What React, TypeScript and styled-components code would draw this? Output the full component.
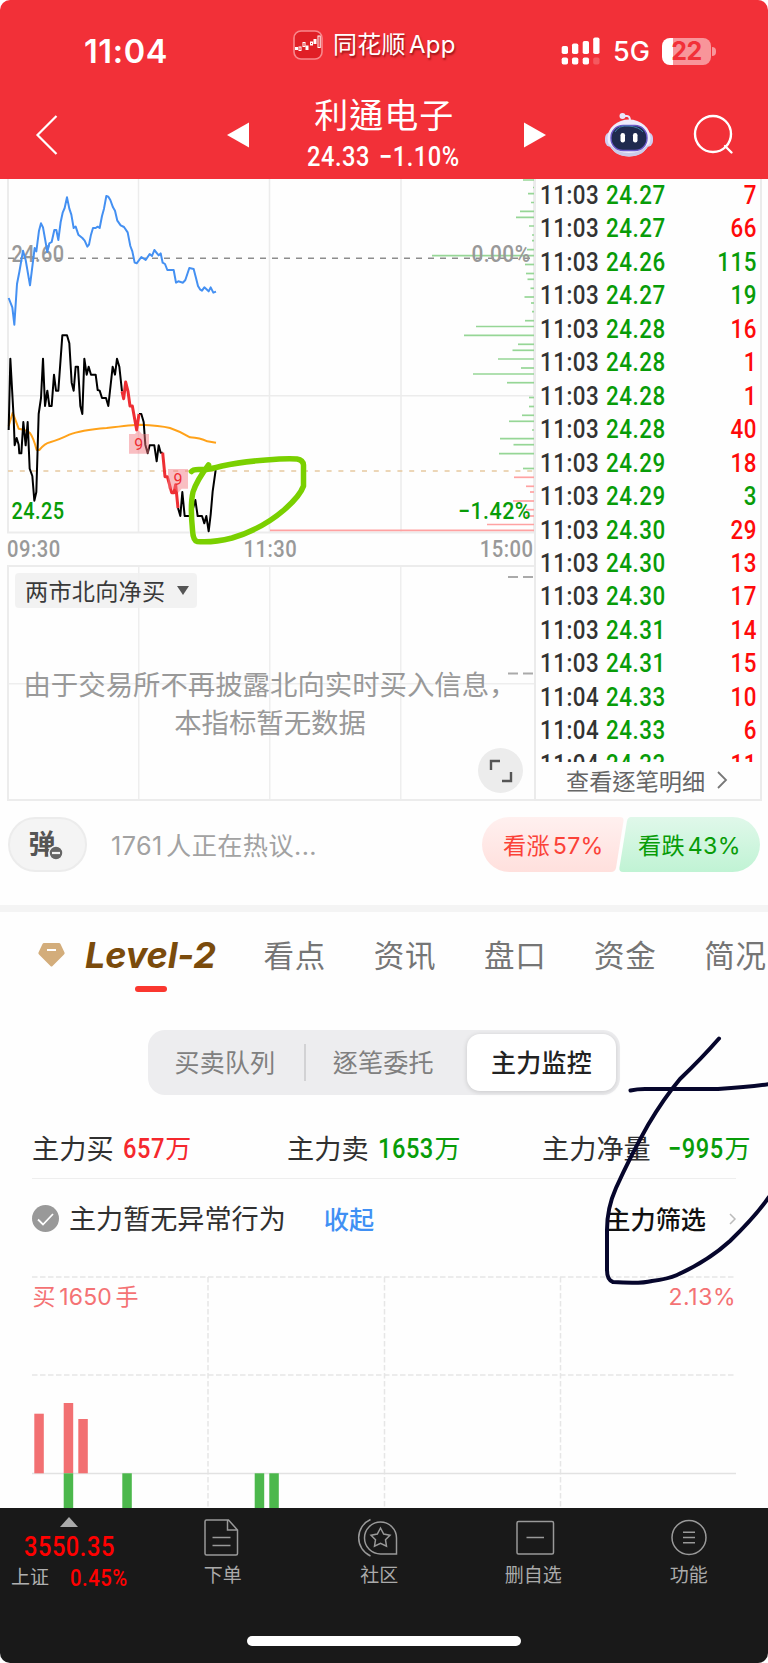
import React from "react";
import styled, { createGlobalStyle } from "styled-components";

const SANS = `Inter, "Noto Sans CJK SC", sans-serif`;
const SANS_TC = `Inter, "Noto Sans CJK TC", "Noto Sans CJK SC", sans-serif`;
const DIN = `Roboto, "Noto Sans CJK SC", sans-serif`;

const RED = "#f23038";
const GREEN = "#089c08";
const TICK_RED = "#ff0a0a";

const GlobalStyle = createGlobalStyle`
  * { box-sizing: border-box; }
  body { margin: 0; background: #fff; font-family: ${SANS}; }
  svg { display: block; flex: none; overflow: visible; }
`;

const Screen = styled.div`
  position: relative;
  width: 768px;
  height: 1663px;
  overflow: hidden;
  border-radius: 10px;
  background: #fefefe;
  display: flex;
  flex-direction: column;
`;

/* condensed numerals used for every price, time and volume */
const Num = styled.span<{ $size: number; $color?: string; $origin?: string; $trim?: number }>`
  display: inline-block;
  font-family: ${DIN};
  font-size: ${(p) => p.$size}px;
  font-weight: 500;
  letter-spacing: 0.6px;
  transform: scaleX(0.86);
  transform-origin: ${(p) => p.$origin ?? "left"} center;
  margin-right: ${(p) => -(p.$trim ?? 0)}px;
  color: ${(p) => p.$color ?? "inherit"};
  white-space: nowrap;
`;

/* ---------- header ---------- */

const Header = styled.header`
  flex: none;
  height: 179px;
  background: ${RED};
  color: #fff;
`;

const StatusBar = styled.div`
  height: 95px;
  padding-top: 22px;
  display: grid;
  grid-template-columns: 293px 268px 1fr;
`;

const Clock = styled.div`
  padding-left: 84px;
  font-size: 32.5px;
  font-weight: 600;
  line-height: 60px;
  letter-spacing: 0.6px;
`;

const AppSource = styled.div`
  display: flex;
  align-items: center;
  gap: 10px;
  height: 45px;
  font-size: 24px;
  letter-spacing: 0.3px;
  word-spacing: -4px;
  line-height: 40px;
  white-space: nowrap;
  text-shadow: 1px 2px 2px rgba(90, 0, 0, 0.6);
  & > span { margin-top: 1px; }
`;

const Signals = styled.div`
  display: flex;
  align-items: center;
  height: 58px;
`;

const Network = styled.span`
  margin-left: 13px;
  width: 49px;
  font-size: 27px;
  font-weight: 500;
  line-height: 62px;
  padding-top: 2px;
`;

const Battery = styled.div`
  width: 49px;
  height: 27px;
  border-radius: 8px;
  background: linear-gradient(90deg, #fff 11px, #f8959a 11px);
  color: ${RED};
  font-size: 25px;
  font-weight: 700;
  line-height: 27px;
  text-align: center;
  letter-spacing: -0.5px;
`;

const BatteryNub = styled.i`
  width: 4px;
  height: 9px;
  margin-left: 1px;
  border-radius: 0 5px 5px 0;
  background: #f8959a;
`;

const TitleBar = styled.div`
  height: 84px;
  display: flex;
  align-items: center;
  padding: 0 0 4px 36px;
`;

const StockTitle = styled.div`
  flex: none;
  width: 275.5px;
  padding: 2px 4px 0 0;
  display: flex;
  flex-direction: column;
  align-items: center;
`;

const StockName = styled.div`
  font-family: ${SANS_TC};
  font-size: 34px;
  line-height: 42px;
  letter-spacing: 1px;
`;

const StockQuote = styled.div`
  display: flex;
  padding-left: 11px;
  line-height: 40px;
`;

const BackIcon = styled.svg`
  margin-right: 168.5px;
`;
const RobotIcon = styled.svg`
  margin: 0 40px 0 58.5px;
`;

/* ---------- quote panel ---------- */

const Quote = styled.section`
  flex: none;
  height: 622px;
  display: flex;
`;

const Charts = styled.div`
  width: 534px;
`;

const Axis = styled.div`
  height: 30px;
  padding: 0 0 0 7px;
  display: flex;
  justify-content: space-between;
  line-height: 29px;
  color: #999;
`;

const Indicator = styled.div`
  position: relative;
  height: 236px;
  margin-left: 7px;
  border: 1.5px solid #ececec;
  border-width: 2px 0 2px 2px;
  background:
    linear-gradient(#eee, #eee) 129px 0 / 1.5px 100% no-repeat,
    linear-gradient(#eee, #eee) 260px 0 / 1.5px 100% no-repeat,
    linear-gradient(#eee, #eee) 391px 0 / 1.5px 100% no-repeat,
    linear-gradient(#eee, #eee) 0 115.5px / 100% 1.5px no-repeat;
`;

const Picker = styled.div`
  display: flex;
  align-items: center;
  gap: 12px;
  width: 182px;
  height: 35px;
  margin: 6px 0 0 6px;
  padding: 0 0 1px 10px;
  border-radius: 4px;
  background: rgba(240, 240, 240, 0.85);
  color: #3a3a3a;
  font-size: 23.2px;
  letter-spacing: 0.2px;
  white-space: nowrap;
`;

const Notice = styled.p`
  margin: 58px 0 0 -3px;
  text-align: center;
  color: #999;
  font-size: 27.4px;
  line-height: 38px;
  white-space: pre;
`;

const Expand = styled.div`
  position: absolute;
  right: 11px;
  bottom: 6px;
  width: 45px;
  height: 45px;
  border-radius: 50%;
  background: #ececec;
  display: grid;
  place-items: center;
`;

const Dashes = styled.svg`
  position: absolute;
  right: 1px;
  top: 8px;
`;

const Ticks = styled.div`
  width: 227.5px;
  border: 2px solid #ebebeb;
  border-top: 0;
  display: flex;
  flex-direction: column;
`;

const TickList = styled.div`
  height: 583px;
  overflow: hidden;
  padding: 0 3px 0 3.5px;
`;

const TickRow = styled.div`
  display: grid;
  grid-template-columns: 66px 80px 1fr;
  height: 33.46px;
  line-height: 33px;
  & > :last-child { text-align: right; }
`;

const TickMore = styled.div`
  flex: 1;
  display: flex;
  align-items: center;
  gap: 12px;
  padding: 0 0 1px 30px;
  color: #666;
  font-family: ${SANS_TC};
  font-size: 23.2px;
  white-space: nowrap;
`;

/* ---------- discussion ---------- */

const Discuss = styled.section`
  flex: none;
  height: 111px;
  padding: 16px 8px 0;
  border-bottom: 7px solid #f4f4f4;
  display: flex;
`;

const DanmuPill = styled.div`
  position: relative;
  width: 79px;
  height: 55px;
  padding-left: 18.5px;
  border: 2px solid #ececec;
  border-radius: 28px;
  background: #f4f4f4;
  color: #555;
  font-size: 27px;
  font-weight: 700;
  line-height: 51px;
`;

const DanmuBadge = styled.svg`
  position: absolute;
  left: 38px;
  top: 26px;
`;

const Talking = styled.div`
  flex: 1;
  padding-left: 24px;
  line-height: 58px;
  color: #a2a2a2;
  font-size: 25.2px;
  letter-spacing: 0.4px;
  word-spacing: -4px;
`;

const Vote = styled.div<{ $down?: boolean }>`
  width: ${(p) => (p.$down ? 141 : 142)}px;
  height: 55px;
  margin-left: ${(p) => (p.$down ? -5 : 0)}px;
  padding-left: ${(p) => (p.$down ? 19 : 21)}px;
  line-height: 58px;
  font-size: 23.2px;
  letter-spacing: 0.3px;
  word-spacing: -4px;
  white-space: nowrap;
  color: ${(p) => (p.$down ? GREEN : "#fb4238")};
  background: ${(p) => (p.$down ? "linear-gradient(#e0f8ea, #c0f3d4)" : "linear-gradient(#fff0ef, #ffe0dd)")};
  clip-path: ${(p) =>
    p.$down
      ? `path("M12 0H113.5A27.5 27.5 0 0 1 113.5 55H4Q0 55 0.4 51L8 4Q9 0 12 0Z")`
      : `path("M27.5 0H138Q142 0 141.5 4L134 51Q133 55 129 55H27.5A27.5 27.5 0 0 1 27.5 0Z")`};
`;

/* ---------- tabs ---------- */

const Tabs = styled.nav`
  flex: none;
  height: 118px;
  padding: 18px 0 0 38px;
  display: flex;
`;

const LevelTab = styled.div`
  flex: none;
  display: flex;
  flex-direction: column;
  align-items: center;
  width: 225.5px;
`;

const LevelName = styled.div`
  display: flex;
  align-items: center;
  align-self: flex-start;
  gap: 20px;
  height: 50px;
  color: #7a4b0c;
  font-size: 36px;
  font-style: italic;
  font-weight: 700;
  letter-spacing: -0.1px;
`;

const ActiveBar = styled.i`
  width: 32px;
  height: 6px;
  margin: 6px 0 0 0;
  border-radius: 3px;
  background: #fa372f;
`;

const Tab = styled.div`
  flex: none;
  width: 110.2px;
  line-height: 52px;
  font-size: 30.5px;
  letter-spacing: 0.8px;
  color: #757575;
  white-space: nowrap;
`;

/* ---------- segmented control ---------- */

const Segments = styled.div`
  flex: none;
  width: 472px;
  height: 65px;
  margin-left: 148px;
  padding: 4px;
  border-radius: 17px;
  background: #ededef;
  display: flex;
  align-items: center;
`;

const Segment = styled.div<{ $active?: boolean; $width: number }>`
  width: ${(p) => p.$width}px;
  height: 57px;
  padding-right: ${(p) => (p.$active ? 0 : 6)}px;
  line-height: 58px;
  text-align: center;
  border-radius: 13px;
  font-family: ${SANS_TC};
  font-size: 25px;
  letter-spacing: 0.2px;
  font-weight: ${(p) => (p.$active ? 500 : 400)};
  color: ${(p) => (p.$active ? "#222" : "#808080")};
  background: ${(p) => (p.$active ? "#fff" : "none")};
  box-shadow: ${(p) => (p.$active ? "0 1px 5px rgba(0,0,0,.16)" : "none")};
`;

const SegmentRule = styled.i`
  width: 1.5px;
  height: 37px;
  background: #d2d2d4;
`;

/* ---------- main force ---------- */

const Stats = styled.div`
  flex: none;
  height: 84px;
  margin: 0 32px;
  padding-top: 33.5px;
  border-bottom: 1.5px solid #eee;
  display: grid;
  grid-template-columns: 255px 255px 1fr;
`;

const Stat = styled.div<{ $gap: number }>`
  display: flex;
  gap: ${(p) => p.$gap}px;
  height: 42px;
  line-height: 42px;
  color: #303030;
  font-size: 27.2px;
  white-space: nowrap;
`;

const StatValue = styled.div<{ $color: string }>`
  color: ${(p) => p.$color};
  font-size: 26px;
  line-height: 39px;
`;

const ForceRow = styled.div`
  flex: none;
  height: 97px;
  padding: 0 32px 20px;
  display: flex;
  align-items: center;
  font-size: 27.1px;
  color: #303030;
  white-space: nowrap;
  & > svg { position: relative; top: 1px; }
`;

const ForceText = styled.span`
  margin-left: 10px;
`;

const Collapse = styled.span`
  margin-left: 38px;
  flex: 1;
  font-size: 25.2px;
  font-weight: 500;
  color: #4090f4;
`;

const Filter = styled.span`
  margin-right: 23px;
  font-family: ${SANS_TC};
  font-size: 25.2px;
  font-weight: 500;
  color: #111;
`;

const FlowChart = styled.svg`
  height: 232px;
`;

/* ---------- bottom bar ---------- */

const BottomBar = styled.footer`
  position: relative;
  flex: none;
  height: 155px;
  background: #191919;
  color: #b0b0b0;
  display: grid;
  grid-template-columns: 144.5px repeat(4, 155.5px);
  grid-template-rows: 128px 10px;
`;

const IndexBox = styled.div`
  padding: 9px 0 0 11px;
  display: flex;
  flex-direction: column;
`;

const IndexArrow = styled.svg`
  margin-left: 49px;
`;

const IndexValue = styled(Num)`
  align-self: flex-start;
  margin: 3px 0 0 13px;
  line-height: 34px;
`;

const IndexMeta = styled.div`
  display: flex;
  gap: 20.5px;
  font-size: 19px;
  line-height: 28px;
`;

const NavItem = styled.div<{ $shift?: number }>`
  padding: 9px 0 0 ${(p) => p.$shift ?? 0}px;
  display: flex;
  flex-direction: column;
  align-items: center;
  font-size: 19px;
  line-height: 30px;
  color: #aaa;
  & > svg { margin-bottom: 2.5px; }
`;

const HomeIndicator = styled.i`
  grid-column: 1 / -1;
  width: 274px;
  height: 10px;
  margin-left: 247px;
  border-radius: 5px;
  background: #fff;
`;

const Ink = styled.svg`
  position: absolute;
  inset: 0;
  pointer-events: none;
`;

const ticks: [string, string, string, boolean?][] = [
  ["11:03", "24.27", "7"],
  ["11:03", "24.27", "66"],
  ["11:03", "24.26", "115", true],
  ["11:03", "24.27", "19", true],
  ["11:03", "24.28", "16"],
  ["11:03", "24.28", "1"],
  ["11:03", "24.28", "1"],
  ["11:03", "24.28", "40"],
  ["11:03", "24.29", "18"],
  ["11:03", "24.29", "3", true],
  ["11:03", "24.30", "29"],
  ["11:03", "24.30", "13"],
  ["11:03", "24.30", "17"],
  ["11:03", "24.31", "14"],
  ["11:03", "24.31", "15"],
  ["11:04", "24.33", "10"],
  ["11:04", "24.33", "6"],
  ["11:04", "24.33", "11"],
];

/* price levels: [y, bar length] */
const sellLevels = [
  [180, 11], [187.5, 1], [193.7, 6], [202.5, 3], [211.3, 14], [217.3, 18], [226, 5], [235, 2], [240.7, 2],
  [249.7, 7], [255.7, 102], [264.5, 9], [273.5, 8], [279.3, 6.5], [288.3, 3.5], [297, 9.5], [303, 3], [311.7, 2],
  [320.7, 9], [326.5, 58], [335.3, 70], [344.3, 16], [350.3, 21.5], [359, 36], [368, 13], [374, 61], [382.7, 27],
  [397.5, 5], [406.5, 5], [415.3, 12], [421.3, 25], [430, 2], [438.7, 34], [444.7, 20.5], [453.7, 35], [468.5, 11],
];
const buyLevels = [
  [477.3, 20], [486.3, 8], [492, 4], [501, 21], [509.7, 8], [516, 8], [524.5, 47], [530.3, 264],
];

const PRICE_A =
  "26,756 31,542 41,720 44,802 50,780 56,800 58,826 64,826 70,732 77,802 83,732 89,872 97,894 103,968 109,942 116,708 123,660 129,542 135,684 142,638 148,684 155,684 162,590 168,638 175,638 187,472 201,472 208,496 215,614 221,638 227,566 234,566 241,684 247,708 253,542 260,590 266,566 273,590 287,590 293,636 299,638 306,660 318,660 325,684 338,566 345,590 351,542 358,566 366,640";
const PRICE_RED1 = "366,640 371,662 377,612 384,640 390,684 397,684 410,756 417,708";
const PRICE_B = "417,708 424,708 431,732 436,800 443,826 449,802 463,802 470,850 476,802 482,824 488,824";
const PRICE_RED2 = "488,824 495,896 502,896 515,944 522,944 527,920 534,990";
const PRICE_C = "534,990 541,1014 547,942 554,1014 573,1014 586,966 593,1014 606,1014 613,1036 619,1014 626,1060 632,1010 638,940 647,876";
const BLUE =
  "26,360 37,388 43,440 51,318 58,282 69,218 77,246 90,322 104,210 109,220 117,158 123,136 129,148 142,222 148,196 155,192 163,156 169,156 175,186 182,132 188,104 194,90 201,58 208,92 214,110 221,150 227,146 235,170 247,180 254,188 262,206 267,200 273,170 279,150 287,150 293,146 299,150 306,114 312,92 319,54 325,56 331,66 339,88 345,98 352,128 362,142 372,147 383,163 391,204 397,220 404,254 410,256 424,237 437,246 449,228 456,234 463,216 476,232 482,226 488,254 495,258 502,276 521,276 528,314 535,310 549,314 556,306 568,270 581,273 588,300 594,324 600,334 606,338 613,328 626,340 632,328 640,344 648,341";

function PriceChart() {
  return (
    <svg width="534" height="356" viewBox="0 179 534 356">
      <g stroke="#ececec" strokeWidth="1.5">
        <path d="M138.5 179V532M269.5 179V532M401 179V532M8 395.7H534" />
        <path d="M8 179V533M534 179V533" strokeWidth="2" />
        <path d="M7 532.5H534" strokeWidth="2" />
      </g>
      <path d="M8 258.300H534" stroke="#8d8d8d" strokeWidth="1.5" strokeDasharray="6 6" />
      <path d="M8 471H534" stroke="#e6c9a0" strokeWidth="1.5" strokeDasharray="5 6.8" />
      <g stroke="#96d696" strokeWidth="1.7">
        {sellLevels.map(([y, w]) => <path key={y} d={`M${534 - w} ${y}H534`} />)}
      </g>
      <g stroke="#ffa2a2" strokeWidth="1.7">
        {buyLevels.map(([y, w]) => <path key={y} d={`M${534 - w} ${y}H534`} />)}
      </g>
      <g fontFamily="Roboto" fontSize="23.500" fontWeight="500" letterSpacing=".5">
        <text x="11.5" y="261.5" fill="#999" textLength="53" lengthAdjust="spacingAndGlyphs">24.60</text>
        <text x="11.5" y="519" fill={GREEN} textLength="53" lengthAdjust="spacingAndGlyphs">24.25</text>
        <text x="471.5" y="262" fill="#999" textLength="59" lengthAdjust="spacingAndGlyphs">0.00%</text>
        <text x="458" y="519" fill={GREEN} textLength="73" lengthAdjust="spacingAndGlyphs">−1.42%</text>
      </g>
      <g transform="translate(0 178) scale(.33333)" fill="none" strokeWidth="6" strokeLinejoin="round">
        <polyline points={BLUE} stroke="#4490f2" />
        <path stroke="#ffa21a" d="M26 744L38 704L56 752Q80 756 89 764Q100 778 110 816L118 816Q135 796 150 793Q175 786 208 770Q240 757 320 750Q400 740 420 740Q480 742 510 750Q540 760 570 778Q600 780 622 790L648 794" />
        <polyline points={PRICE_A} stroke="#000" />
        <polyline points={PRICE_B} stroke="#000" />
        <polyline points={PRICE_C} stroke="#000" />
        <g stroke="#ee2e33" strokeWidth="9">
          <polyline points={PRICE_RED1} />
          <polyline points={PRICE_RED2} />
        </g>
        <g fill="#f47880" fillOpacity=".47">
          <path d="M387 768H405L415 756L426 768H447V827H387Z" />
          <path d="M504 873H564V932H545L535 944L525 932H504Z" />
        </g>
      </g>
      <g fontFamily="Roboto" fontSize="16" fill="#ee2e33" textAnchor="middle">
        <text x="138.7" y="450">9</text>
        <text x="178" y="485">9</text>
      </g>
    </svg>
  );
}

function Robot() {
  return (
    <RobotIcon width="48" height="46" viewBox="0 0 48 46">
      <path d="M18 4H22Q25 4 25 9" fill="none" stroke="#e9e6fa" strokeWidth="2" />
      <circle cx="17.5" cy="4" r="3" fill="#e9e6fa" />
      <rect x="0" y="20" width="48" height="15" rx="6" fill="#cfcdf0" />
      <ellipse cx="24" cy="26" rx="21.5" ry="18.5" fill="#eeecfb" />
      <path d="M4 32Q9 44.5 24 44.5T44 32Q35 41 24 41T4 32Z" fill="#c9cbea" />
      <rect x="6" y="13.5" width="36" height="25" rx="12" fill="#1f2a4e" stroke="#6a58c8" strokeWidth="1.4" />
      <path d="M10 20Q14 13 24 14T38 20" fill="none" stroke="#3e7fa8" strokeWidth="1" />
      <rect x="15.5" y="21" width="4.5" height="9.5" rx="2.2" fill="#fff" />
      <rect x="28" y="21" width="4.5" height="9.5" rx="2.2" fill="#fff" />
    </RobotIcon>
  );
}

function AppLogo() {
  return (
    <svg width="30" height="30" viewBox="0 0 30 30">
      <rect x="1" y="1" width="28" height="28" rx="7" fill="#e01f26" stroke="#f8888c" strokeWidth="1.6" />
      <path d="M2 18.500H5M14 15.500V20M22 9V14" stroke="#fff" strokeWidth="3" />
      <g fill="none" stroke="#fff" strokeWidth="1">
        <rect x="6" y="17" width="2" height="3.500" />
        <rect x="10" y="12.500" width="2" height="4" />
        <rect x="17.500" y="12" width="2" height="3" />
        <rect x="25" y="6" width="2.200" height="11.500" />
      </g>
    </svg>
  );
}

const dots = [561.7, 572, 582.7, 593.2];
const dotTops = [46, 43.5, 41, 37.5];

export default function App() {
  return (
    <Screen>
      <GlobalStyle />
      <Header>
        <StatusBar>
          <Clock>11:04</Clock>
          <AppSource>
            <AppLogo />
            <span>同花顺 App</span>
          </AppSource>
          <Signals>
            <svg width="39" height="28" viewBox="561 37 39 28" fill="#fff">
              {dots.map((x, i) => (
                <g key={x}>
                  <rect x={x} y={dotTops[i]} width="6.300" height={54 - dotTops[i]} rx="1.800" />
                  <rect x={x} y="57.500" width="6.300" height="7" rx="1.800" opacity={i === 3 ? 0.2 : 1} />
                </g>
              ))}
            </svg>
            <Network>5G</Network>
            <Battery>22</Battery>
            <BatteryNub />
          </Signals>
        </StatusBar>
        <TitleBar>
          <BackIcon width="22" height="40" viewBox="0 0 22 40" fill="none" stroke="#fff" strokeWidth="2.2">
            <path d="M20.500 1L1.500 20L20.500 39" />
          </BackIcon>
          <svg width="22" height="26" fill="#fff"><path d="M0 13L22 .5V25.500Z" /></svg>
          <StockTitle>
            <StockName>利通电子</StockName>
            <StockQuote>
              <Num $size={27.5} $trim={1}>24.33</Num>
              <Num $size={27.5}>−1.10%</Num>
            </StockQuote>
          </StockTitle>
          <svg width="22" height="26" fill="#fff"><path d="M22 13L0 .5V25.500Z" /></svg>
          <Robot />
          <svg width="42" height="40" viewBox="692 116 42 40" fill="none" stroke="#fff" strokeWidth="2.400" strokeLinecap="round">
            <circle cx="712" cy="135" r="18" />
            <path d="M724 147L730.500 153.500" />
          </svg>
        </TitleBar>
      </Header>

      <Quote>
        <Charts>
          <PriceChart />
          <Axis>
            <Num $size={23.5}>09:30</Num>
            <Num $size={23.5} $origin="center">11:30</Num>
            <Num $size={23.5} $origin="right">15:00</Num>
          </Axis>
          <Indicator>
            <Dashes width="26" height="102" stroke="#aaa" strokeWidth="2.200">
              <path d="M1 2H11M16 2H26M1 98.500H11M16 98.500H26" />
            </Dashes>
            <Picker>
              两市北向净买
              <svg width="12" height="9" fill="#555"><path d="M0 0H12L6 9Z" /></svg>
            </Picker>
            <Notice>{"由于交易所不再披露北向实时买入信息，\n本指标暂无数据"}</Notice>
            <Expand>
              <svg width="24" height="24" fill="none" stroke="#555" strokeWidth="2.400">
                <path d="M2 11V2H11M13 22H22V13" />
              </svg>
            </Expand>
          </Indicator>
        </Charts>
        <Ticks>
          <TickList>
            {ticks.map(([time, price, volume, down], i) => (
              <TickRow key={i}>
                <Num $size={26} $color="#333">{time}</Num>
                <Num $size={26} $color={GREEN}>{price}</Num>
                <Num $size={26} $origin="right" $color={down ? GREEN : TICK_RED}>{volume}</Num>
              </TickRow>
            ))}
          </TickList>
          <TickMore>
            查看逐笔明细
            <svg width="10" height="18" fill="none" stroke="#777" strokeWidth="1.800"><path d="M1 1L9 9L1 17" /></svg>
          </TickMore>
        </Ticks>
      </Quote>

      <Discuss>
        <DanmuPill>
          弹
          <DanmuBadge width="16" height="16" viewBox="0 0 16 16">
            <circle cx="8" cy="8" r="7" fill="#666" stroke="#f4f4f4" strokeWidth="1.500" />
            <path d="M4 8H12" stroke="#f4f4f4" strokeWidth="2.200" />
          </DanmuBadge>
        </DanmuPill>
        <Talking>1761 人正在热议...</Talking>
        <Vote>看涨 57%</Vote>
        <Vote $down>看跌 43%</Vote>
      </Discuss>

      <Tabs>
        <LevelTab>
          <LevelName>
            <svg width="27" height="24" viewBox="0 0 27 24">
              <path d="M6 0H21Q22 0 22.500 1L26.500 9.500Q27 10.500 26 11.500L14.500 23Q13.500 24 12.500 23L1 11.500Q0 10.500 .5 9.500L4.500 1Q5 0 6 0Z" fill="#d3ad7b" />
              <path d="M9 7H18" stroke="#fff" strokeWidth="2" />
            </svg>
            <span>Level-2</span>
          </LevelName>
          <ActiveBar />
        </LevelTab>
        {["看点", "资讯", "盘口", "资金", "简况"].map((t) => <Tab key={t}>{t}</Tab>)}
      </Tabs>

      <Segments>
        <Segment $width={152}>买卖队列</Segment>
        <SegmentRule />
        <Segment $width={161.500}>逐笔委托</Segment>
        <Segment $width={149} $active>主力监控</Segment>
      </Segments>

      <Stats>
        <Stat $gap={9}>主力买<StatValue $color="#f5282d"><Num $size={27.5} $trim={6}>657</Num>万</StatValue></Stat>
        <Stat $gap={9}>主力卖<StatValue $color={GREEN}><Num $size={27.5} $trim={8}>1653</Num>万</StatValue></Stat>
        <Stat $gap={17}>主力净量<StatValue $color={GREEN}><Num $size={27.5} $trim={8}>−995</Num>万</StatValue></Stat>
      </Stats>

      <ForceRow>
        <svg width="27" height="27" viewBox="0 0 27 27">
          <circle cx="13.500" cy="13.500" r="13.500" fill="#999" />
          <path d="M6 14.500L11 19.500L21 9" fill="none" stroke="#fff" strokeWidth="1.800" />
        </svg>
        <ForceText>主力暂无异常行为</ForceText>
        <Collapse>收起</Collapse>
        <Filter>主力筛选</Filter>
        <svg width="7" height="12" fill="none" stroke="#bbb" strokeWidth="1.500"><path d="M1 1L6 6L1 11" /></svg>
      </ForceRow>

      <FlowChart width="768" height="232" viewBox="0 1276 768 232">
        <g stroke="#e6e6e6" strokeWidth="1.500" strokeDasharray="5.500 2.500">
          <path d="M32 1277H736M32 1375H736M208 1277V1508M384.500 1277V1508M560.500 1277V1508" />
        </g>
        <path d="M32 1473.500H736" stroke="#e2e2e2" strokeWidth="1.300" />
        <g fill="#f27072">
          <rect x="34.300" y="1413.700" width="9.500" height="59.600" />
          <rect x="63.700" y="1403" width="9.500" height="70.300" />
          <rect x="78.300" y="1419" width="9.500" height="54.300" />
        </g>
        <g fill="#4cb84c">
          <rect x="63.700" y="1473.300" width="9.500" height="34.700" />
          <rect x="122.300" y="1473.300" width="9.500" height="34.700" />
          <rect x="254.700" y="1473.300" width="9.500" height="34.700" />
          <rect x="269.300" y="1473.300" width="9.500" height="34.700" />
        </g>
        <g fill="#f47274" fontFamily={`Inter, "Noto Sans CJK SC"`} fontSize="23">
          <text x="32.500" y="1305" textLength="106" wordSpacing="-3">买 1650 手</text>
          <text x="668.500" y="1305" textLength="67">2.13%</text>
        </g>
      </FlowChart>

      <BottomBar>
        <IndexBox>
          <IndexArrow width="18" height="10" fill="#aaa"><path d="M0 10L9 0L18 10Z" /></IndexArrow>
          <IndexValue $size={27.5} $color="#ff0000">3550.35</IndexValue>
          <IndexMeta>
            上证
            <Num $size={23.5} $color="#ff0000">0.45%</Num>
          </IndexMeta>
        </IndexBox>
        <NavItem $shift={1}>
          <svg width="40" height="41" viewBox="202.500 1517 40 41" fill="none" stroke="#999" strokeWidth="1.500">
            <path d="M206 1520H228L237 1530V1553.500Q237 1555 235.500 1555H206Q204.500 1555 204.500 1553.500V1521.500Q204.500 1520 206 1520ZM227 1520V1530H237M212 1537.500H230M212 1545.500H230" />
          </svg>
          下单
        </NavItem>
        <NavItem $shift={3}>
          <svg width="42" height="41" viewBox="358.500 1517 42 41" fill="none" stroke="#999" strokeWidth="1.500">
            <path d="M397 1554H381A16 16 0 1 1 397 1538Z" />
            <path d="M371 1519.500A20 20 0 0 0 371 1556" />
            <path d="M381 1528L384.200 1534L390.500 1535.200L386 1539.800L387 1546.200L381 1543.300L375 1546.200L376 1539.800L371.500 1535.200L377.800 1534Z" />
          </svg>
          社区
        </NavItem>
        <NavItem>
          <svg width="40" height="41" viewBox="513.500 1517 40 41" fill="none" stroke="#999" strokeWidth="1.500">
            <rect x="517.500" y="1521.500" width="36.500" height="32.500" rx="1.500" />
            <path d="M527 1537.500H544.500" />
          </svg>
          删自选
        </NavItem>
        <NavItem>
          <svg width="40" height="41" viewBox="669 1517 40 41" fill="none" stroke="#999" strokeWidth="1.500">
            <circle cx="689" cy="1537.500" r="17" />
            <path d="M683 1532.300H695M683 1537.500H695M683 1542.700H695" />
          </svg>
          功能
        </NavItem>
        <HomeIndicator />
      </BottomBar>

      <Ink width="768" height="1663" viewBox="0 0 768 1663" fill="none" strokeLinecap="round" strokeLinejoin="round">
        <path stroke="#7ad000" strokeWidth="5.500" d="M191.500 471.500Q193 469 201 469.500Q208 470 222 466Q240 462 266 460Q288 458 297 459Q303 460 303.500 465V486Q300 496 284 510Q262 529 232 538Q212 543 197 541.500Q193 540 192.500 530Q190 505 193 492Q197 480 208.500 465" />
        <path stroke="#06062c" strokeWidth="4" d="M719 1038.500Q702 1058 680 1079Q664 1098 648 1125Q631 1155 616 1188Q607 1208 607 1230V1270Q607 1280 613 1282Q640 1284 652 1281Q668 1279 677 1275Q708 1261 730 1241Q755 1217 769 1197" />
        <path stroke="#06062c" strokeWidth="4" d="M630.500 1090.500Q637 1089 645 1089H718Q750 1087 770 1084" />
      </Ink>
    </Screen>
  );
}
